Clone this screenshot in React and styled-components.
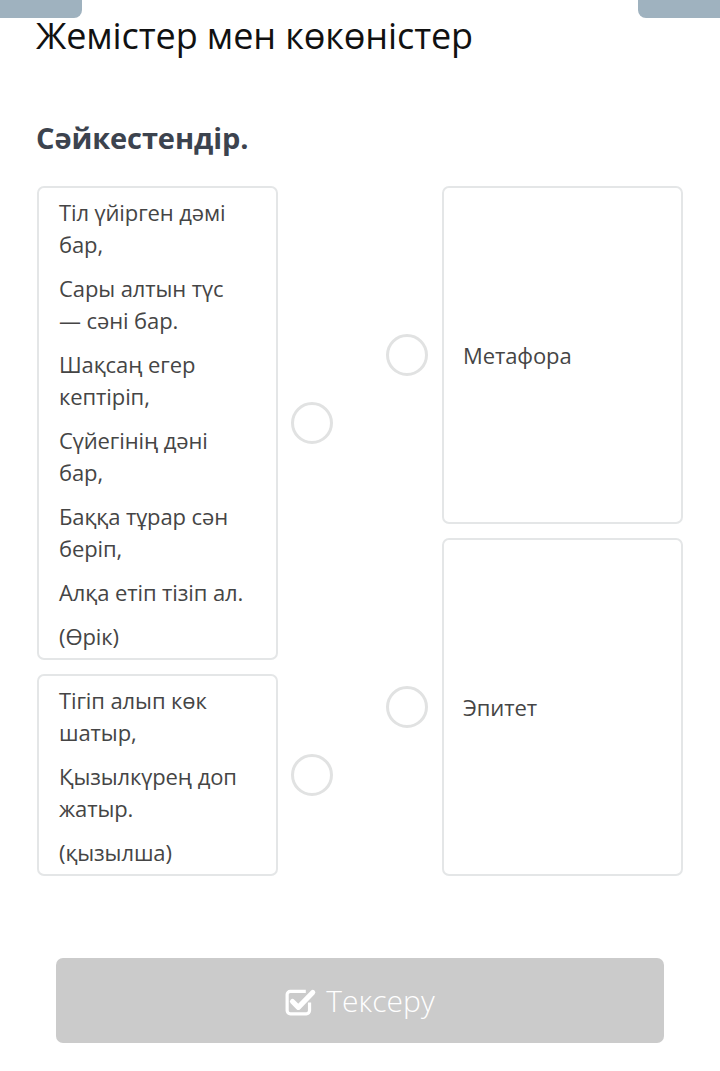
import React from "react";
import styled, { createGlobalStyle } from "styled-components";

const leftItems = [
  [
    "Тіл үйірген дәмі бар,",
    "Сары алтын түс — сәні бар.",
    "Шақсаң егер кептіріп,",
    "Сүйегінің дәні бар,",
    "Баққа тұрар сән беріп,",
    "Алқа етіп тізіп ал.",
    "(Өрік)",
  ],
  ["Тігіп алып көк шатыр,", "Қызылкүрең доп жатыр.", "(қызылша)"],
];

const rightItems = ["Метафора", "Эпитет"];

const App = () => {
  return (
    <>
      <GlobalStyle />
      <Page>
        <TopBar>
          <Tab />
          <Tab />
        </TopBar>
        <Title>Жемістер мен көкөністер</Title>
        <Question>Сәйкестендір.</Question>

        <Board>
          <Column>
            {leftItems.map((lines, i) => (
              <Row key={i} $grow={lines.length}>
                <Card>
                  {lines.map((line, j) => (
                    <Line key={j}>{line}</Line>
                  ))}
                </Card>
                <Dot />
              </Row>
            ))}
          </Column>
          <Column>
            {rightItems.map((text, i) => (
              <Row key={i} $grow={1} $right>
                <Dot />
                <Card $centered>
                  <Line>{text}</Line>
                </Card>
              </Row>
            ))}
          </Column>
        </Board>

        <CheckButton>
          <CheckIcon />
          <span>Тексеру</span>
        </CheckButton>
      </Page>
    </>
  );
};

const CheckIcon = () => (
  <svg width="32" height="32" viewBox="0 0 30 30">
    <path
      d="M23 16.5 V24 a3 3 0 0 1 -3 3 H5 a3 3 0 0 1 -3 -3 V9 a3 3 0 0 1 3 -3 H19.5"
      fill="none"
      stroke="#fff"
      strokeWidth="3"
      strokeLinejoin="round"
    />
    <path
      d="M7 15.5 L12.5 21 L26 7"
      fill="none"
      stroke="#fff"
      strokeWidth="4.8"
      strokeLinecap="round"
      strokeLinejoin="round"
    />
  </svg>
);

export default App;

const GlobalStyle = createGlobalStyle`
  html, body {
    margin: 0;
    padding: 0;
    background: #ffffff;
  }
  body {
    font-family: "Open Sans", "Noto Sans", sans-serif;
  }
`;

const Page = styled.div`
  width: 720px;
  min-height: 1071px;
  box-sizing: border-box;
  padding: 0 37px 28px 37px;
  display: flex;
  flex-direction: column;
`;

// 상단 탭
const TopBar = styled.div`
  display: flex;
  justify-content: space-between;
  margin: 0 -37px;
`;

const Tab = styled.div`
  width: 82px;
  height: 18px;
  background-color: #9fb2bf;
  &:first-child {
    border-bottom-right-radius: 8px;
  }
  &:last-child {
    border-bottom-left-radius: 8px;
  }
`;

const Title = styled.h1`
  margin: -6px 0 0 -1px;
  font-size: 36px;
  line-height: 48px;
  font-weight: 400;
  color: #111;
  letter-spacing: -0.1px;
`;

const Question = styled.h2`
  margin: 57px 0 0 -1px;
  font-size: 29px;
  line-height: 42px;
  font-weight: 700;
  color: #3c434e;
  letter-spacing: -0.1px;
`;

// 매칭 보드
const Board = styled.div`
  display: grid;
  grid-template-columns: 1fr 1fr;
  margin-top: 27px;
`;

const Column = styled.div`
  display: flex;
  flex-direction: column;
  gap: 14px;
`;

const Row = styled.div`
  display: flex;
  align-items: center;
  gap: ${({ $right }) => ($right ? "14px" : "13px")};
  flex: ${({ $grow }) => $grow} 1 auto;
  justify-content: ${({ $right }) => ($right ? "flex-end" : "flex-start")};
`;

const Card = styled.div`
  width: 241px;
  box-sizing: border-box;
  align-self: stretch;
  border: 2px solid #e4e6e7;
  border-radius: 7px;
  padding: ${({ $centered }) =>
    $centered ? "0 16px 0 19px" : "8px 30px 6px 20px"};
  display: flex;
  flex-direction: column;
  justify-content: ${({ $centered }) => ($centered ? "center" : "flex-start")};
  gap: 12px;
  min-height: ${({ $centered }) => ($centered ? "337px" : "0")};
`;

const Line = styled.div`
  font-size: 22px;
  line-height: 32px;
  color: #454545;
  letter-spacing: -0.1px;
`;

const Dot = styled.div`
  width: 42px;
  height: 42px;
  box-sizing: border-box;
  border-radius: 50%;
  border: 3px solid #e1e2e2;
  flex-shrink: 0;
`;

const CheckButton = styled.button`
  margin: 82px auto 0;
  width: 608px;
  height: 85px;
  border: none;
  border-radius: 7px;
  background-color: #cbcbcb;
  color: #ffffff;
  font-family: "Open Sans", "Noto Sans", sans-serif;
  font-size: 30px;
  font-weight: 300;
  display: flex;
  align-items: center;
  justify-content: center;
  gap: 9px;
  cursor: pointer;
`;
